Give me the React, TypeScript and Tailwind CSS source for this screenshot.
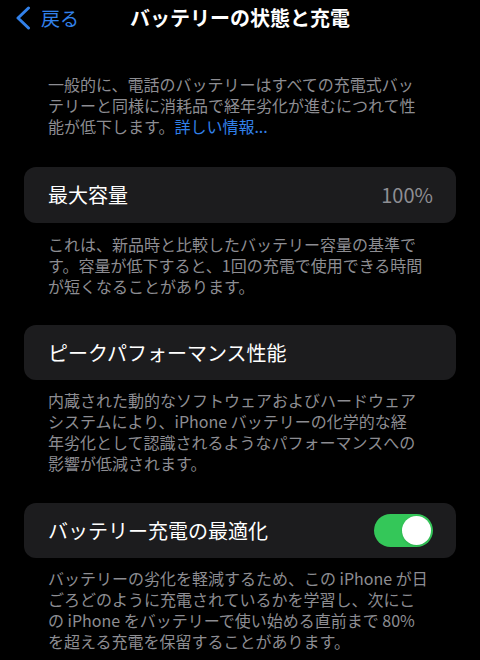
import React from "react";

const font = { fontFamily: '"Noto Sans CJK JP", "Noto Sans", sans-serif' };

const Note = ({ lines, className = "" }: { lines: React.ReactNode[]; className?: string }) => (
  <div className={`pl-[48px] pr-[16px] text-[16px] leading-[21px] text-[#8d8d92] whitespace-nowrap ${className}`}>
    {lines.map((line, i) => (
      <div key={i}>{line}</div>
    ))}
  </div>
);

const Card = ({ children, className = "" }: { children: React.ReactNode; className?: string }) => (
  <div
    className={`mx-[24px] h-[55px] rounded-[12px] bg-[#1c1c1e] pl-[24px] pr-[23px] flex items-center justify-between text-[20px] text-white ${className}`}
  >
    {children}
  </div>
);

const Toggle = ({ on }: { on: boolean }) => (
  <div
    className={`w-[59px] h-[33px] rounded-full p-[2px] flex ${
      on ? "bg-[#34c759] justify-end" : "bg-[#39393d] justify-start"
    }`}
  >
    <div className="w-[29px] h-[29px] rounded-full bg-white shadow" />
  </div>
);

export default function App() {
  return (
    <div className="w-[480px] h-[660px] bg-black overflow-hidden" style={font}>
      <header className="h-[36px] grid grid-cols-[1fr_auto_1fr] items-center">
        <button className="flex items-center gap-[10px] pl-[15px] text-[#3281ea] text-[19px]">
          <svg width="16" height="24" viewBox="0 0 16 24" fill="none">
            <path d="M13.5 2 L3 12 L13.5 22" stroke="#3281ea" strokeWidth="3" strokeLinecap="round" strokeLinejoin="round" />
          </svg>
          <span>戻る</span>
        </button>
        <h1 className="text-white text-[20px] font-semibold">バッテリーの状態と充電</h1>
        <div />
      </header>

      <Note
        className="mt-[38px]"
        lines={[
          "一般的に、電話のバッテリーはすべての充電式バッ",
          "テリーと同様に消耗品で経年劣化が進むにつれて性",
          <>
            能が低下します。<span className="text-[#3281ea]">詳しい情報...</span>
          </>,
        ]}
      />

      <Card className="mt-[30px] h-[56px]">
        <span>最大容量</span>
        <span className="text-[#8e8e93]">100%</span>
      </Card>
      <Note
        className="mt-[11px]"
        lines={[
          "これは、新品時と比較したバッテリー容量の基準で",
          "す。容量が低下すると、1回の充電で使用できる時間",
          "が短くなることがあります。",
        ]}
      />

      <Card className="mt-[28px]">
        <span>ピークパフォーマンス性能</span>
      </Card>
      <Note
        className="mt-[10px]"
        lines={[
          "内蔵された動的なソフトウェアおよびハードウェア",
          "システムにより、iPhone バッテリーの化学的な経",
          "年劣化として認識されるようなパフォーマンスへの",
          "影響が低減されます。",
        ]}
      />

      <Card className="mt-[29px] pr-[22px]">
        <span>バッテリー充電の最適化</span>
        <Toggle on />
      </Card>
      <Note
        className="mt-[10px]"
        lines={[
          "バッテリーの劣化を軽減するため、この iPhone が日",
          "ごろどのように充電されているかを学習し、次にこ",
          "の iPhone をバッテリーで使い始める直前まで 80%",
          "を超える充電を保留することがあります。",
        ]}
      />
    </div>
  );
}
